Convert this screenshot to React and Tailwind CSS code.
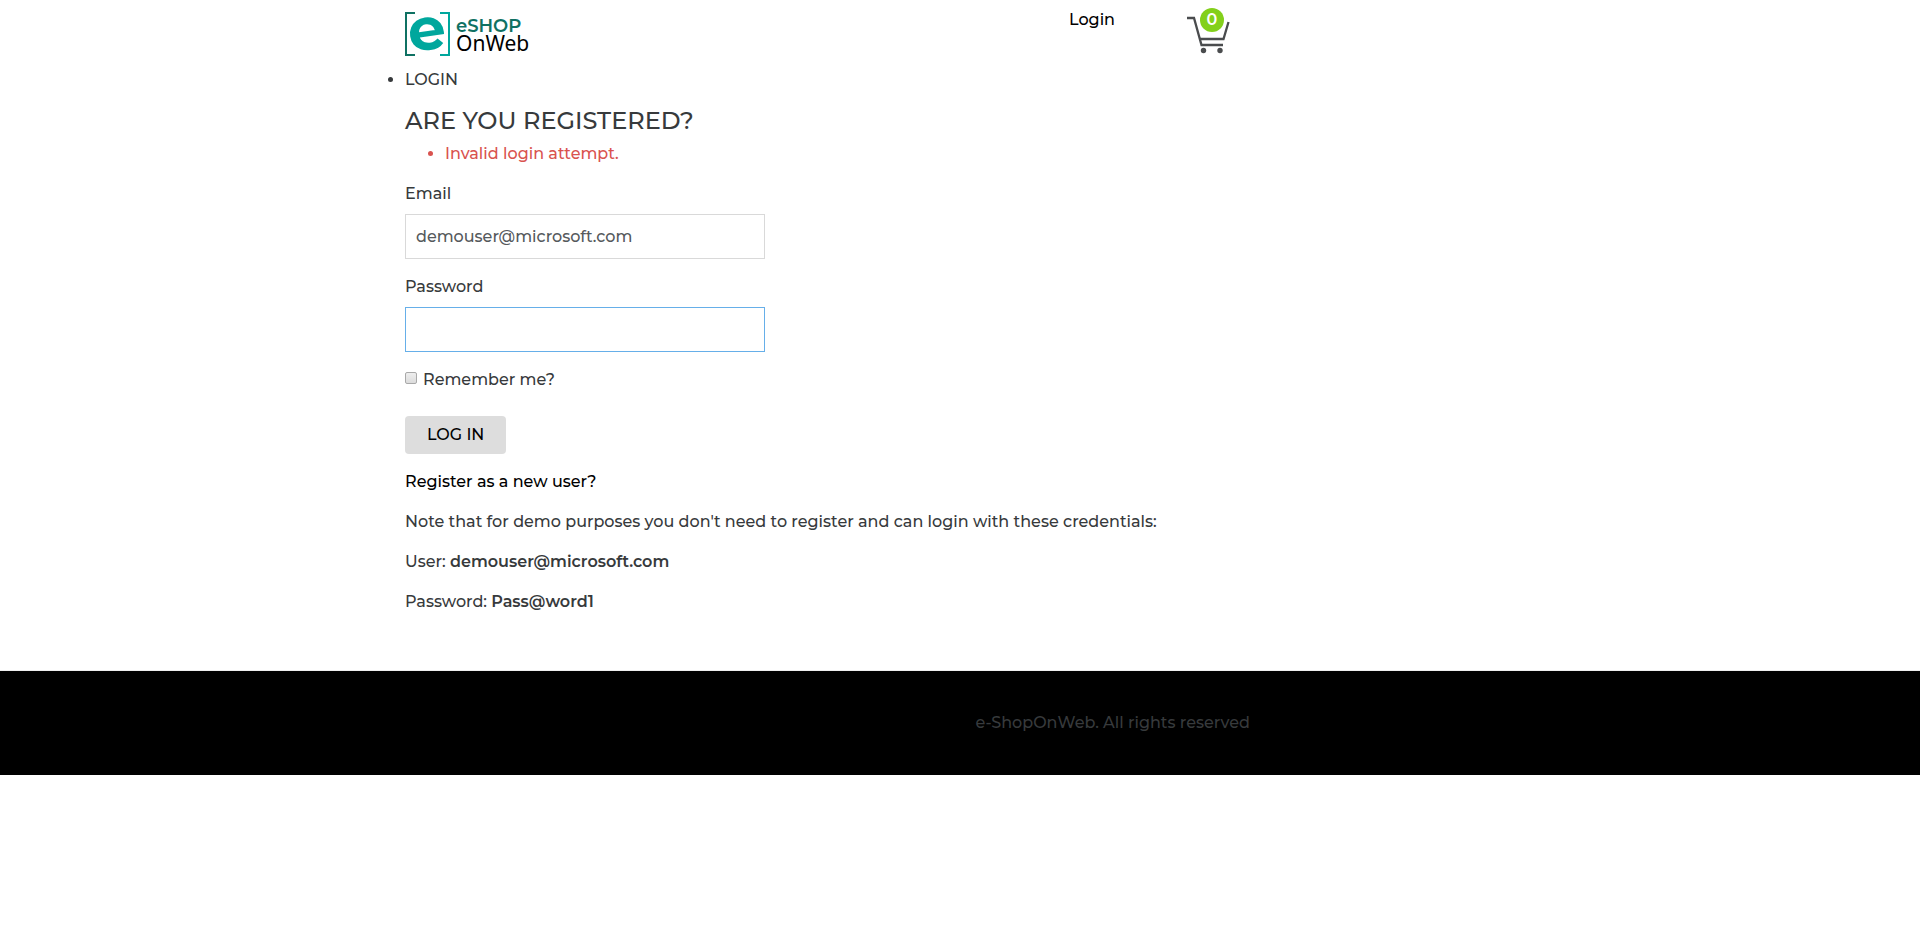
function Logo() {
  return (
    <svg width="130" height="50" viewBox="0 0 130 50" className="overflow-visible" role="img" aria-label="eSHOP OnWeb">
      <path d="M10 5H1V47H10" fill="none" stroke="#0f7163" strokeWidth="2" />
      <path d="M35 5H44V47H35" fill="none" stroke="#00a79d" strokeWidth="2" />
      <text x="3" y="42" transform="rotate(-8 22 26)" className="fill-[#00a79d] font-['Montserrat',sans-serif] text-[60px] leading-none font-bold">e</text>
      <text x="51" y="24" className="fill-[#0f7163] font-['Montserrat',sans-serif] text-[18px] font-semibold">eSHOP</text>
      <text x="51" y="43" className="fill-black font-['Noto_Sans',sans-serif] text-[21px] font-normal">OnWeb</text>
    </svg>
  );
}

function CartIcon() {
  return (
    <svg width="44" height="48" viewBox="0 0 44 48" fill="none" stroke="#4a4c4e" strokeWidth="2.3" aria-hidden="true">
      <path d="M0 10H7L14.500 37H36" />
      <path d="M12.500 31H36.500L41.500 14" />
      <circle cx="16.500" cy="42.500" r="2.700" fill="#4a4c4e" stroke="none" />
      <circle cx="33" cy="42.500" r="2.700" fill="#4a4c4e" stroke="none" />
    </svg>
  );
}

const fieldClass =
  "mt-2 block h-[45px] w-full border px-2.5 text-[#55595c] outline-none";

export default function App() {
  return (
    <div className="bg-white font-['Montserrat','Inter',sans-serif] text-[16px] leading-6 font-medium text-[#373a3c]">
      <header className="mx-auto flex max-w-[1140px] items-start px-[15px] pt-2 pb-2.5">
        <a href="#home" className="block">
          <Logo />
        </a>
        <a href="#login" className="ml-auto text-black">Login</a>
        <a href="#basket" className="relative mr-[284px] ml-[72px] block" aria-label="Basket, 0 items">
          <CartIcon />
          <span className="absolute top-0 left-[13px] flex size-6 items-center justify-center rounded-full bg-[#83d01b] font-semibold text-white">0</span>
        </a>
      </header>

      <main className="mx-auto max-w-[1140px] px-[15px] pb-14">
        <ul className="list-disc">
          <li>LOGIN</li>
        </ul>
        <h1 className="mt-4 mb-2 text-2xl leading-[26px]">ARE YOU REGISTERED?</h1>
        <ul className="mb-4 list-disc pl-10 text-[#d9534f]">
          <li>Invalid login attempt.</li>
        </ul>
        <form className="max-w-[360px]">
          <label htmlFor="email" className="block">Email</label>
          <input id="email" type="email" defaultValue="demouser@microsoft.com" className={`${fieldClass} border-[#d9d9d9]`} />
          <label htmlFor="password" className="mt-4 block">Password</label>
          <input id="password" type="password" className={`${fieldClass} border-[#66afe9]`} />
          <div className="mt-4 flex items-start gap-1.5">
            <input id="remember" type="checkbox" className="mt-1 size-3 appearance-none rounded-[2px] border border-[#a9a9a9] bg-linear-to-b from-[#eeeeee] to-[#dcdcdc] checked:bg-[#66afe9]" />
            <label htmlFor="remember">Remember me?</label>
          </div>
          <button type="button" className="mt-6 block h-[38px] rounded-[4px] bg-[#dddddd] px-[22px] text-black">LOG IN</button>
        </form>
        <div className="mt-4 flex flex-col items-start gap-4">
          <a href="#register" className="text-black">Register as a new user?</a>
          <p>Note that for demo purposes you don't need to register and can login with these credentials:</p>
          <p>User: <b className="font-semibold">demouser@microsoft.com</b></p>
          <p>Password: <b className="font-semibold">Pass@word1</b></p>
        </div>
      </main>

      <footer className="border-t border-[#eeeeee] bg-black py-10">
        <div className="mx-auto flex max-w-[1140px] px-[15px]">
          <p className="mr-[265px] ml-auto">e-ShopOnWeb. All rights reserved</p>
        </div>
      </footer>
    </div>
  );
}
